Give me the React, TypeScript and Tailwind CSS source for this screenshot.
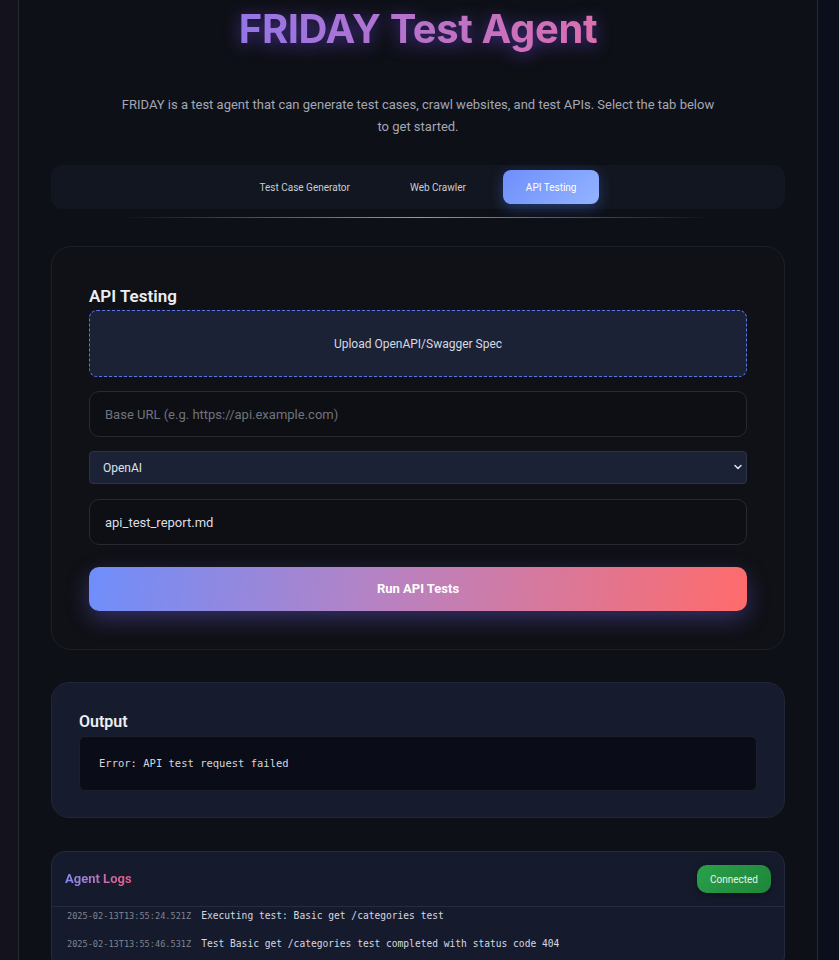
import { ChevronDown } from "lucide-react";

const TABS = ["Test Case Generator", "Web Crawler", "API Testing"];

const LOGS = [
  { ts: "2025-02-13T13:55:24.521Z", msg: "Executing test: Basic get /categories test" },
  { ts: "2025-02-13T13:55:46.531Z", msg: "Test Basic get /categories test completed with status code 404" },
];

function App() {
  const activeTab = "API Testing";

  return (
    <div className="min-h-screen bg-[linear-gradient(90deg,#14121d,#0f1019_50%,#0b0f1c)] font-['Roboto',sans-serif]">
      <div className="ml-[18px] w-[800px] border-x border-[#272a35] bg-[#0e1017] px-[32px] pt-[4px] pb-10">
        <h1 className="text-center font-['Inter',sans-serif] text-[40px] font-bold leading-[49px] tracking-[-0.01em]">
          <span className="bg-[linear-gradient(90deg,#9476e6,#dc6fae)] bg-clip-text text-transparent drop-shadow-[0_3px_8px_rgba(124,77,255,0.5)]">
            FRIDAY Test Agent
          </span>
        </h1>

        <p className="mx-auto mt-[41px] max-w-[600px] text-center text-[13px] leading-[22px] text-[#a3a7b3]">
          FRIDAY is a test agent that can generate test cases, crawl websites, and test APIs. Select the tab below to get started.
        </p>

        <div className="mt-[27px] flex justify-center gap-[14px] rounded-xl bg-[#121620] p-[5px]">
          {TABS.map((tab) => (
            <button
              key={tab}
              type="button"
              className={
                tab === activeTab
                  ? "h-[34px] rounded-lg bg-[linear-gradient(135deg,#6e8efb,#93b4ff)] px-[23px] text-[10px] text-white shadow-[0_4px_14px_rgba(70,130,255,0.35)]"
                  : "h-[34px] rounded-lg px-[23px] text-[10px] text-[#c9ccd6]"
              }
            >
              {tab}
            </button>
          ))}
        </div>
        <div className="mx-auto mt-[8px] h-px w-[590px] bg-[linear-gradient(90deg,rgba(110,142,251,0),#7b97ff_50%,rgba(110,142,251,0))]" />

        <div className="mt-[28px] rounded-[20px] border border-[#1d2029] bg-[#0f1116] px-[37px] pt-[37px] pb-[38px]">
          <h2 className="mb-[2px] text-[17px] font-semibold leading-[24px] text-[#eceef3]">API Testing</h2>
          <div className="flex h-[67px] items-center justify-center rounded-lg border border-dashed border-[#5a78e6] bg-[#1c2236] text-[12px] text-[#d6d9e2]">
            Upload OpenAPI/Swagger Spec
          </div>
          <input
            className="mt-[14px] block h-[46px] w-full rounded-[10px] border border-[#262932] bg-[#0d0f14] px-[15px] text-[13px] text-[#d8dae2] placeholder:text-[#6f737d] outline-none"
            placeholder="Base URL (e.g. https://api.example.com)"
          />
          <div className="relative mt-[14px]">
            <select className="block h-[33px] w-full appearance-none rounded-[4px] border border-[#2c3347] bg-[#1c2236] px-[13px] text-[12px] text-[#dfe2ea] outline-none">
              <option>OpenAI</option>
            </select>
            <ChevronDown
              size={12}
              strokeWidth={3}
              className="pointer-events-none absolute right-[3px] top-[10px] text-[#dfe2ea]"
            />
          </div>
          <input
            className="mt-[15px] block h-[46px] w-full rounded-[10px] border border-[#262932] bg-[#0d0f14] px-[15px] text-[13px] text-[#dcdee5] outline-none"
            defaultValue="api_test_report.md"
          />
          <button
            type="button"
            className="mt-[22px] block h-[44px] w-full rounded-[10px] bg-[linear-gradient(100deg,#6e8efb,#b782c2_45%,#ff6b6b)] text-[13px] font-bold text-white shadow-[0_8px_22px_rgba(120,100,240,0.35)]"
          >
            Run API Tests
          </button>
        </div>

        <div className="mt-[32px] rounded-[18px] border border-[#1f2637] bg-[#161c2d] px-[27px] pt-[27px] pb-[26px]">
          <h2 className="mb-[2px] text-[16px] font-semibold leading-[24px] text-[#eceef3]">Output</h2>
          <div className="flex h-[55px] items-center rounded-[6px] border border-[#1b202c] bg-[#0a0d17] px-[19px] font-['DejaVu_Sans_Mono',monospace] text-[10.5px] text-[#d4d7df]">
            Error: API test request failed
          </div>
        </div>

        <div className="mt-[33px] overflow-hidden rounded-[14px] border border-[#222a3b] bg-[#151b2c]">
          <div className="flex h-[55px] items-center justify-between border-b border-[#252c3d] px-[13px]">
            <span className="bg-[linear-gradient(90deg,#7f8cf5,#f0577f)] bg-clip-text text-[13px] font-bold text-transparent">
              Agent Logs
            </span>
            <span className="flex h-[28px] items-center rounded-[10px] bg-[linear-gradient(135deg,#2aa04a,#1e8639)] px-[13px] text-[10px] text-[#e6f3e9] shadow-[0_2px_8px_rgba(0,0,0,0.35)]">
              Connected
            </span>
          </div>
          <div className="flex flex-col gap-[10px] px-[15px] pb-4">
            {LOGS.map((log) => (
              <div key={log.ts + log.msg} className="flex h-[18px] items-center gap-[10px] font-['DejaVu_Sans_Mono',monospace]">
                <span className="text-[8.6px] text-[#7f8492]">{log.ts}</span>
                <span className="text-[9.6px] text-[#d5d8e0]">{log.msg}</span>
              </div>
            ))}
          </div>
        </div>
      </div>
    </div>
  );
}

export default App;
